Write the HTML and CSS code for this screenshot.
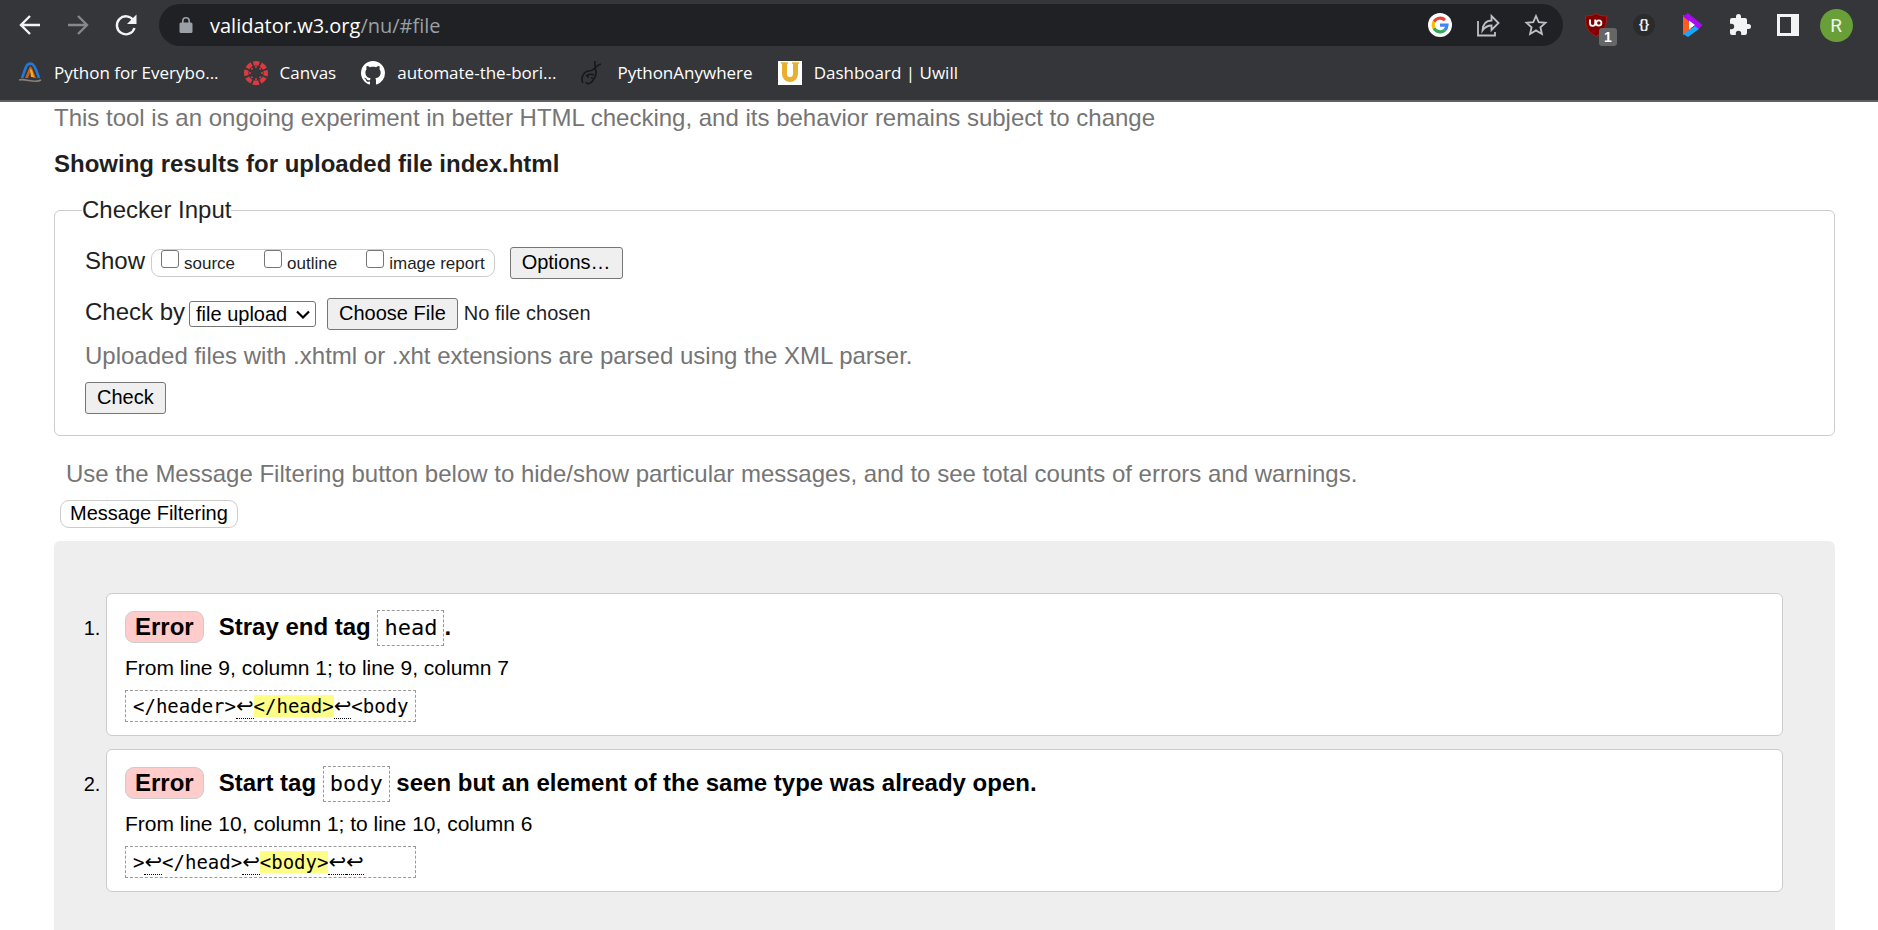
FILE: index.html
```
<!DOCTYPE html>
<html lang="en">
<head>
<meta charset="utf-8">
<title>Showing results for uploaded file index.html - Nu Html Checker</title>
<link rel="stylesheet" href="styles.css">
</head>
<body>
<header class="browser">
  <div class="toolbar">
    <button class="tool" aria-label="Back"><svg width="24" height="24" viewBox="0 0 24 24"><path class="line" d="M22 12H3.500M12 3l-9 9 9 9"/></svg></button>
    <button class="tool dim" aria-label="Forward"><svg width="24" height="24" viewBox="0 0 24 24"><path class="line" d="M2 12h18.500M12 3l9 9-9 9"/></svg></button>
    <button class="tool" aria-label="Reload"><svg width="26" height="26" viewBox="0 0 26 26"><path class="line" d="M20.500 8.500A9 9 0 1 0 21.500 16"/><path fill="currentColor" d="M23.500 2.500v9.500H14z"/></svg></button>
    <div class="omnibox">
      <svg class="lock" width="14" height="18" viewBox="0 0 14 18"><path fill="#9aa0a6" fill-rule="evenodd" d="M3 6.500V5a4 4 0 0 1 8 0v1.500h1a1.500 1.500 0 0 1 1.500 1.500v7.500A1.500 1.500 0 0 1 12 17H2a1.500 1.500 0 0 1-1.500-1.500V8A1.500 1.500 0 0 1 2 6.500zm1.600 0h4.800V5a2.400 2.400 0 0 0-4.800 0z"/></svg>
      <div class="url"><span class="host">validator.w3.org</span>/nu/#file</div>
      <button class="tool" aria-label="Google"><svg width="24" height="24" viewBox="0 0 24 24"><circle cx="12" cy="12" r="12" fill="#fff"/><g fill="none" stroke-width="3.200"><path stroke="#ea4335" d="M6 8.800A7 7 0 0 1 17 7.200"/><path stroke="#fbbc05" d="M6 15.200A7 7 0 0 1 6 8.800"/><path stroke="#34a853" d="M16.600 17.200A7 7 0 0 1 6 15.200"/><path stroke="#4285f4" d="M12 12.200h7a7 7 0 0 1-2.400 5"/></g></svg></button>
      <button class="tool soft" aria-label="Share"><svg width="24" height="24" viewBox="0 0 24 24"><path class="thin" d="M2 8v14.500h17V19M6.500 17.500C7 11 10 7.500 15.500 7.500V3L22.500 10l-7 7v-4.500c-4 0-6.500 1.500-9 5z"/></svg></button>
      <button class="tool soft" aria-label="Bookmark this page"><svg width="24" height="24" viewBox="0 0 24 24"><path class="thin" d="M12 3l2.700 6.200 6.800.600-5.100 4.500 1.500 6.700-5.900-3.600L6.100 21l1.500-6.700L2.500 9.800l6.800-.600z"/></svg></button>
    </div>
    <div class="extensions">
      <button class="tool" aria-label="uBlock Origin, 1 blocked"><svg width="24" height="26" viewBox="0 0 24 26"><path fill="#800000" stroke="#a02020" d="M12 1.500c3 2 6.500 2.500 10.500 2.500 0 10-1 15-10.500 20.500C2.500 19 1.500 14 1.500 4 5.500 4 9 3.500 12 1.500z"/><path fill="none" stroke="#fff" stroke-width="1.800" d="M6 7.500v3.800a2.300 2.300 0 0 0 5.200 0V7.500m0 6v-6"/><circle cx="14.800" cy="11" r="2.600" fill="none" stroke="#fff" stroke-width="1.800"/></svg><span class="count">1</span></button>
      <button class="tool" aria-label="JSON viewer"><span class="json">{}</span></button>
      <button class="tool" aria-label="Player"><svg width="20" height="26" viewBox="0 0 20 26"><path fill="#ff5a1f" d="M1 3v20l8-6V8z"/><path fill="#a60bf0" d="M1 4.500 6 1l14.500 12-4 4z"/><path fill="#19a6ff" d="m1 22 12-8 4 3L6 25z"/><path fill="#fff" d="M7 8.500v9l6-4.500z"/></svg></button>
      <button class="tool" aria-label="Extensions"><svg width="24" height="24" viewBox="0 0 24 24"><path fill="currentColor" d="M20.500 11H19V7a2 2 0 0 0-2-2h-4V3.500a2.500 2.500 0 0 0-5 0V5H4a2 2 0 0 0-2 2v3.800h1.500a2.700 2.700 0 0 1 0 5.400H2V20a2 2 0 0 0 2 2h3.800v-1.500a2.700 2.700 0 0 1 5.400 0V22H17a2 2 0 0 0 2-2v-4h1.500a2.500 2.500 0 0 0 0-5z"/></svg></button>
      <button class="tool" aria-label="Side panel"><svg width="22" height="22" viewBox="0 0 22 22"><path fill="currentColor" fill-rule="evenodd" d="M0 0h22v22H0zM3 3v16h11V3z"/></svg></button>
      <button class="tool" aria-label="Profile"><span class="avatar">R</span></button>
    </div>
  </div>
  <nav class="bookmarks" aria-label="Bookmarks">
    <a href="#"><svg width="24" height="24" viewBox="0 0 24 24"><path fill="none" stroke="#2279d8" stroke-width="2.600" d="M4 17 8 6c1-3 4-4 6-3 3 1 4 6 7 14"/><path fill="#c9601a" d="m7 17 5-12 2 2-4 10zM12 9l2-2 4 10h-3l-2-5z"/><path fill="#f2b01e" d="m12 8 2 1 2 7h-3z"/><path fill="none" stroke="#8b8178" stroke-width="1.600" d="M1 19c6-2 16 4 22 0"/></svg>Python for Everybo...</a>
    <a href="#"><svg width="24" height="24" viewBox="0 0 24 24"><circle cx="12" cy="12" r="9.800" fill="none" stroke="#d93b42" stroke-width="4.400" stroke-dasharray="5.900 1.800" stroke-dashoffset="3"/><g fill="#d93b42"><circle cx="12" cy="6" r="1"/><circle cx="12" cy="18" r="1"/><circle cx="6" cy="12" r="1"/><circle cx="18" cy="12" r="1"/><circle cx="7.800" cy="7.800" r="1"/><circle cx="16.200" cy="7.800" r="1"/><circle cx="7.800" cy="16.200" r="1"/><circle cx="16.200" cy="16.200" r="1"/></g></svg>Canvas</a>
    <a href="#"><svg width="24" height="24" viewBox="0 0 16 16"><path fill="#fff" d="M8 0C3.580 0 0 3.580 0 8c0 3.540 2.290 6.530 5.470 7.590.4.070.55-.17.55-.38 0-.19-.01-.82-.01-1.490-2.010.37-2.530-.49-2.690-.94-.09-.23-.48-.94-.82-1.130-.28-.15-.68-.52-.01-.53.63-.01 1.080.58 1.230.82.72 1.210 1.870.87 2.330.66.07-.52.28-.87.51-1.070-1.780-.2-3.640-.89-3.640-3.950 0-.87.31-1.590.82-2.150-.08-.2-.36-1.020.08-2.120 0 0 .67-.21 2.200.82.64-.18 1.320-.27 2-.27s1.360.09 2 .27c1.530-1.040 2.200-.82 2.200-.82.44 1.100.16 1.920.08 2.120.51.56.82 1.270.82 2.150 0 3.070-1.870 3.750-3.650 3.950.29.25.54.73.54 1.480 0 1.070-.01 1.930-.01 2.200 0 .21.15.46.55.38A8.010 8.010 0 0 0 16 8c0-4.420-3.580-8-8-8z"/></svg>automate-the-bori...</a>
    <a href="#"><svg width="24" height="24" viewBox="0 0 24 24"><g fill="none" stroke="#17181a" stroke-width="1.600"><path d="M14 0c-1 3 1 4 0 7M20 3c-4 1-4 3-6 4 2 4 1 8-1 11-3 5-7 6-8 3M2 22c-3-5 1-12 6-12 2 0 4-1 6-3M5 15c3-2 6-2 8-1"/></g><circle cx="7" cy="16" r="1" fill="#17181a"/><circle cx="11" cy="17" r="1" fill="#17181a"/></svg>PythonAnywhere</a>
    <a href="#"><svg width="24" height="24" viewBox="0 0 24 24"><path fill="#fff" d="M0 0h24v24H0z"/><path fill="none" stroke="#e9b02f" stroke-width="5" d="M6.500 2v11a5.500 5.500 0 0 0 11 0V2"/><path fill="none" stroke="#e9b02f" stroke-width="1.500" d="M3 2h7M14 2h7"/></svg>Dashboard | Uwill</a>
  </nav>
</header>

<main class="page">
  <p class="note">This tool is an ongoing experiment in better HTML checking, and its behavior remains subject to change</p>
  <h1 class="title">Showing results for uploaded file index.html</h1>

  <form>
    <fieldset class="checker">
      <legend>Checker Input</legend>
      <div class="row show">
        <span class="caption">Show</span>
        <div class="options">
          <label><input type="checkbox">source</label>
          <label><input type="checkbox">outline</label>
          <label><input type="checkbox">image report</label>
        </div>
        <button type="button" class="btn">Options…</button>
      </div>
      <div class="row by">
        <label class="caption" for="method">Check by</label>
        <div class="picker">
          <select id="method"><option>file upload</option><option>address</option><option>text input</option></select>
          <svg class="chevron" width="14" height="10" viewBox="0 0 14 10"><path fill="none" stroke="#000" stroke-width="2.200" d="M1 1.500l6 6 6-6"/></svg>
        </div>
        <input class="file" type="file" aria-label="File to check">
      </div>
      <p class="note hint">Uploaded files with .xhtml or .xht extensions are parsed using the XML parser.</p>
      <button type="button" class="btn">Check</button>
    </fieldset>
  </form>

  <section class="filters">
    <p class="note">Use the Message Filtering button below to hide/show particular messages, and to see total counts of errors and warnings.</p>
    <button type="button" class="filter">Message Filtering</button>
  </section>

  <section class="results">
    <ol>
      <li>
        <p class="message"><strong class="badge">Error</strong>Stray end tag <code>head</code>.</p>
        <p class="location">From line 9, column 1; to line 9, column 7</p>
        <p class="extract"><code>&lt;/header&gt;<span class="lf">↩</span><mark>&lt;/head&gt;</mark><span class="lf">↩</span>&lt;body</code></p>
      </li>
      <li>
        <p class="message"><strong class="badge">Error</strong>Start tag <code>body</code> seen but an element of the same type was already open.</p>
        <p class="location">From line 10, column 1; to line 10, column 6</p>
        <p class="extract"><code>&gt;<span class="lf">↩</span>&lt;/head&gt;<span class="lf">↩</span><mark>&lt;body&gt;</mark><span class="lf">↩</span><span class="lf">↩</span></code></p>
      </li>
    </ol>
  </section>
</main>
</body>
</html>
```

FILE: styles.css
```
* { box-sizing: border-box; }

body {
  margin: 0;
  background: #fff;
  color: #1f1f1f;
  font-family: "Liberation Sans", Arial, sans-serif;
  font-size: 24px;
  line-height: 28px;
}

p, h1, ol { margin: 0; }

/* Browser chrome */
.browser {
  background: #35363a;
  border-bottom: 2px solid #5f6063;
  font-family: "Open Sans", "Noto Sans", sans-serif;
}
.toolbar {
  display: flex;
  align-items: center;
  padding: 4px 18px 0 6px;
}
.tool {
  position: relative;
  display: flex;
  flex: none;
  align-items: center;
  justify-content: center;
  width: 48px;
  height: 42px;
  padding: 0;
  border: 0;
  background: none;
  color: #f1f3f4;
}
.dim { color: #86888b; }
.soft { color: #bdc1c6; }
.line { fill: none; stroke: currentColor; stroke-width: 2.4; }
.thin { fill: none; stroke: currentColor; stroke-width: 1.8; }
.omnibox {
  display: flex;
  flex: 1;
  align-items: center;
  height: 42px;
  margin: 0 9px;
  padding: 0 3px 0 20px;
  border-radius: 21px;
  background: #202124;
}
.url {
  flex: 1;
  padding: 2px 0 0 17px;
  color: #9aa0a6;
  font-size: 20px;
}
.host { color: #fff; }
.extensions { display: flex; }
.count {
  position: absolute;
  right: 3px;
  bottom: 0;
  width: 18px;
  height: 18px;
  border-radius: 3px;
  background: #666;
  color: #fff;
  font-size: 14px;
  font-weight: 700;
  line-height: 18px;
}
.json {
  width: 22px;
  height: 22px;
  border-radius: 50%;
  background: #2b2b2b;
  font-size: 13px;
  font-weight: 600;
  line-height: 20px;
}
.avatar {
  width: 33px;
  height: 33px;
  border-radius: 50%;
  background: #689f38;
  font-family: Roboto, sans-serif;
  font-size: 19px;
  line-height: 33px;
}
.bookmarks {
  display: flex;
  align-items: center;
  gap: 25px;
  height: 54px;
  padding: 0 18px;
}
.bookmarks a {
  display: flex;
  align-items: center;
  gap: 12px;
  color: #fff;
  font-size: 17px;
  text-decoration: none;
}

/* Page */
.page { padding: 2px 43px 0 54px; }
.note { color: #757575; }
.title {
  margin: 18px 0;
  font-size: 24px;
}

.checker {
  margin: 0;
  padding: 18px 30px 21px;
  border: 1px solid #ccc;
  border-radius: 6px;
}
.checker legend { margin-left: -3px; padding: 0; }
.row { display: flex; align-items: center; }
.caption { padding-bottom: 4px; }
.show { margin-top: 5px; }
.by { margin-top: 19px; }
.hint { margin: 12px 0; }

.options {
  display: flex;
  gap: 29px;
  height: 28px;
  margin: 0 15px 0 6px;
  padding: 0 9px;
  border: 1px solid #ccc;
  border-radius: 9px;
  font-size: 17px;
}
.options label { display: flex; align-items: flex-start; gap: 5px; }
.options input {
  width: 18px;
  height: 18px;
  margin: 0;
  border: 1px solid #767676;
  border-radius: 3px;
  background: #fff;
  appearance: none;
}
.btn, .file::file-selector-button {
  height: 32px;
  padding: 0 11px 2px;
  border: 1px solid #767676;
  border-radius: 3px;
  background: #efefef;
  color: #000;
  font-family: inherit;
  font-size: 20px;
}
.btn { display: block; }
.picker { position: relative; margin: 0 11px 0 4px; }
.picker select {
  display: block;
  width: 127px;
  height: 26px;
  padding: 0 6px;
  border: 1px solid #767676;
  border-radius: 3px;
  background: #fff;
  color: #000;
  font-family: inherit;
  font-size: 20px;
  appearance: none;
}
.chevron {
  position: absolute;
  top: 9px;
  right: 6px;
  pointer-events: none;
}
.file { font-family: inherit; font-size: 20px; }
.file::file-selector-button { margin-right: 6px; }

.filters { padding: 24px 6px 13px; }
.filters .note { padding-left: 6px; }
.filter {
  display: block;
  height: 28px;
  margin-top: 12px;
  padding: 0 9px 2px;
  border: 1px solid #ccc;
  border-radius: 9px;
  background: #fff;
  color: #000;
  font-family: inherit;
  font-size: 20px;
}

.results {
  padding: 52px 52px 26px;
  border-radius: 6px 6px 0 0;
  background: #eee;
  color: #000;
}
.results ol { padding: 0; font-size: 20px; }
.results li {
  margin-bottom: 13px;
  padding: 15px 18px 13px;
  border: 1px solid #ccc;
  border-radius: 6px;
  background: #fff;
}
.message {
  font-size: 24px;
  font-weight: 700;
  line-height: 36px;
}
.badge {
  display: inline-block;
  margin-right: 15px;
  padding: 0 9px;
  border: 1px solid #ccc;
  border-radius: 9px;
  background: #fcc;
  line-height: 30px;
}
code { font-family: "DejaVu Sans Mono", monospace; }
.message code {
  display: inline-block;
  padding: 0 6px;
  border: 1px dashed #999;
  font-size: 22px;
  font-weight: 400;
  line-height: 34px;
}
.location { margin: 8px 0; font-size: 21px; }
.extract code {
  display: block;
  width: max-content;
  min-width: 291px;
  padding: 0 7px;
  border: 1px dashed #999;
  font-size: 19px;
  line-height: 30px;
}
.extract mark { background: #ff8; color: #000; }
.lf {
  border-bottom: 1px dotted #000;
  font-family: "DejaVu Sans", sans-serif;
  font-size: 21px;
  line-height: 20px;
}
```
